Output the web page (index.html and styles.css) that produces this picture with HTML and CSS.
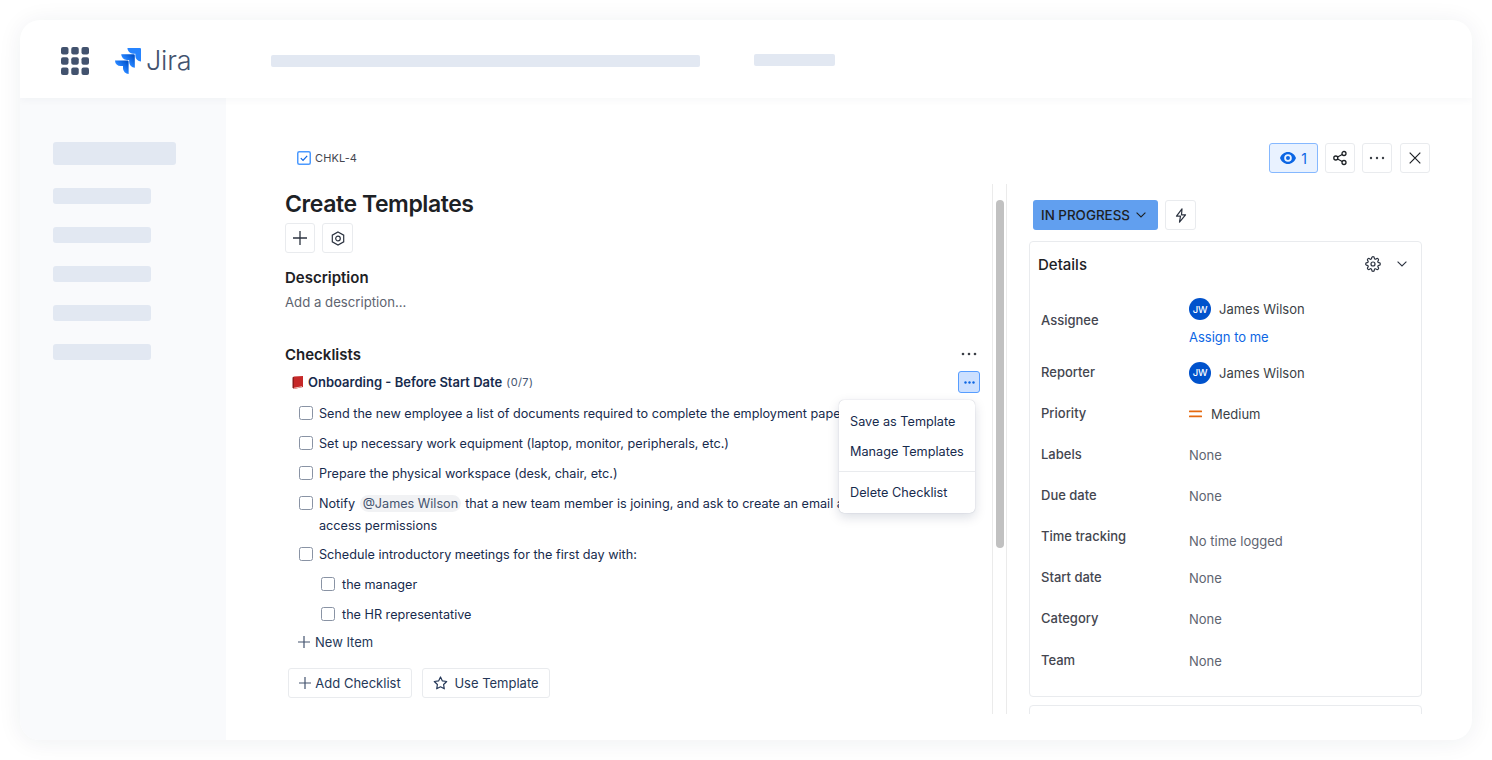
FILE: index.html
```html
<!DOCTYPE html>
<html lang="en">
<head>
<meta charset="utf-8">
<title>Create Templates</title>
<link rel="stylesheet" href="styles.css">
</head>
<body>
<div class="app">
  <header class="top">
    <svg class="apps" width="28" height="28" viewBox="0 0 28 28" fill="#42526e">
      <rect x="0" y="0" width="7.5" height="7.5" rx="2"/><rect x="10.25" y="0" width="7.5" height="7.5" rx="2"/><rect x="20.5" y="0" width="7.5" height="7.5" rx="2"/>
      <rect x="0" y="10.25" width="7.5" height="7.5" rx="2"/><rect x="10.25" y="10.25" width="7.5" height="7.5" rx="2"/><rect x="20.5" y="10.25" width="7.5" height="7.5" rx="2"/>
      <rect x="0" y="20.5" width="7.5" height="7.5" rx="2"/><rect x="10.25" y="20.5" width="7.5" height="7.5" rx="2"/><rect x="20.5" y="20.5" width="7.5" height="7.5" rx="2"/>
    </svg>
    <svg class="mark" width="26" height="26" viewBox="0 0 24 24">
      <defs>
        <linearGradient id="g1" x1="0.9" y1="0.1" x2="0.45" y2="0.55"><stop offset="0" stop-color="#0052cc"/><stop offset="1" stop-color="#2684ff"/></linearGradient>
      </defs>
      <path fill="url(#g1)" d="M11.571 11.513H0a5.218 5.218 0 0 0 5.232 5.215h2.13v2.057A5.215 5.215 0 0 0 12.575 24V12.518a1.005 1.005 0 0 0-1.005-1.005z"/>
      <path fill="url(#g1)" d="M17.294 5.757H5.736a5.215 5.215 0 0 0 5.215 5.214h2.129v2.058a5.218 5.218 0 0 0 5.215 5.214V6.758a1.001 1.001 0 0 0-1.001-1.001z"/>
      <path fill="#2684ff" d="M23.013 0H11.455a5.215 5.215 0 0 0 5.215 5.215h2.129v2.057A5.215 5.215 0 0 0 24 12.483V1.005A1.001 1.001 0 0 0 23.013 0z"/>
    </svg>
    <span class="jira">Jira</span>
    <span class="skel skel-search"></span>
    <span class="skel skel-link"></span>
  </header>
  <div class="body">
    <aside class="side">
      <span class="skel skel-head"></span>
      <span class="skel skel-item"></span>
      <span class="skel skel-item"></span>
      <span class="skel skel-item"></span>
      <span class="skel skel-item"></span>
      <span class="skel skel-item"></span>
    </aside>
    <main class="main">
      <div class="issue-head">
        <div class="crumb">
          <svg width="14" height="14" viewBox="0 0 14 14"><rect x="0.75" y="0.75" width="12.5" height="12.5" rx="1.5" fill="#fff" stroke="#4c9aff" stroke-width="1.5"/><path d="M3.8 7.2l2.2 2.2 4.2-4.6" fill="none" stroke="#0c66e4" stroke-width="1.2"/></svg>
          <span>CHKL-4</span>
        </div>
        <div class="head-actions">
          <button class="btn btn-watch">
            <svg width="16" height="12" viewBox="0 0 16 12"><path fill="#0c66e4" fill-rule="evenodd" d="M8 0C4.300 0 1.300 2.500 0 6c1.300 3.500 4.300 6 8 6s6.700-2.500 8-6c-1.300-3.500-4.300-6-8-6zm0 9.800a3.800 3.800 0 1 1 0-7.600 3.800 3.800 0 0 1 0 7.600zM8 4a2 2 0 1 0 0 4 2 2 0 0 0 0-4z"/></svg>
            <span>1</span>
          </button>
          <button class="btn btn-icon">
            <svg width="16" height="16" viewBox="0 0 16 16" fill="none" stroke="#1d2125" stroke-width="1.3"><circle cx="12" cy="3.500" r="2"/><circle cx="3.800" cy="8" r="2"/><circle cx="12" cy="12.500" r="2"/><path d="M5.600 7l4.600-2.500M5.600 9l4.600 2.500"/></svg>
          </button>
          <button class="btn btn-icon">
            <svg width="16" height="4" viewBox="0 0 16 4" fill="#3b3f46"><circle cx="2" cy="2" r="1.200"/><circle cx="8" cy="2" r="1.200"/><circle cx="14" cy="2" r="1.200"/></svg>
          </button>
          <button class="btn btn-icon btn-close">
            <svg width="12" height="12" viewBox="0 0 12 12" fill="none" stroke="#1d2125" stroke-width="1.200"><path d="M.7.7l10.600 10.600M11.300.7L.7 11.300"/></svg>
          </button>
        </div>
      </div>
      <div class="columns">
        <section class="left">
          <h1 class="title">Create Templates</h1>
          <div class="title-actions">
            <button class="btn btn-icon">
              <svg width="14" height="14" viewBox="0 0 14 14" fill="none" stroke="#2c3340" stroke-width="1.300"><path d="M7 0v14M0 7h14"/></svg>
            </button>
            <button class="btn btn-icon btn-wide">
              <svg width="14" height="15" viewBox="0 0 14 15" fill="none" stroke="#2c3340" stroke-width="1.200"><path d="M7 .9l5.700 3.300v6.600L7 14.100 1.300 10.800V4.200z"/><circle cx="7" cy="7.500" r="2.300"/></svg>
            </button>
          </div>
          <h2 class="section desc-title">Description</h2>
          <p class="desc">Add a description...</p>
          <div class="check-head">
            <h2 class="section">Checklists</h2>
            <svg class="more" width="16" height="4" viewBox="0 0 16 4" fill="#3b3f46"><circle cx="2" cy="2" r="1.300"/><circle cx="8" cy="2" r="1.300"/><circle cx="14" cy="2" r="1.300"/></svg>
          </div>
          <div class="list-head">
            <svg class="book" width="11" height="13" viewBox="0 0 11 13"><path fill="#c62828" d="M2 0.500l9-0.500v11l-9 2z"/><path fill="#8e1c1c" d="M0.500 1.500L2 0.500V13L0.500 11.500z"/><path fill="#f1d9d0" d="M2 11.800l8-1.500v.7l-8 1.700z"/></svg>
            <strong>Onboarding - Before Start Date</strong>
            <span class="count">(0/7)</span>
            <button class="dots">
              <svg width="11" height="3" viewBox="0 0 11 3" fill="#0c66e4"><circle cx="1.500" cy="1.500" r="1.200"/><circle cx="5.500" cy="1.500" r="1.200"/><circle cx="9.500" cy="1.500" r="1.200"/></svg>
            </button>
          </div>
          <div class="item"><span class="box"></span><span>Send the new employee a list of documents required to complete the employment pape</span></div>
          <div class="item"><span class="box"></span><span>Set up necessary work equipment (laptop, monitor, peripherals, etc.)</span></div>
          <div class="item"><span class="box"></span><span>Prepare the physical workspace (desk, chair, etc.)</span></div>
          <div class="item item-multi"><span class="box"></span><span>Notify <span class="mention">@James Wilson</span> that a new team member is joining, and ask to create an email a<br>access permissions</span></div>
          <div class="item"><span class="box"></span><span>Schedule introductory meetings for the first day with:</span></div>
          <div class="item item-sub"><span class="box"></span><span>the manager</span></div>
          <div class="item item-sub"><span class="box"></span><span>the HR representative</span></div>
          <div class="new-item">
            <svg width="12" height="12" viewBox="0 0 12 12" fill="none" stroke="#44546f" stroke-width="1.200"><path d="M6 0v12M0 6h12"/></svg>
            <span>New Item</span>
          </div>
          <div class="list-actions">
            <button class="btn btn-text btn-add">
              <svg width="12" height="12" viewBox="0 0 12 12" fill="none" stroke="#44546f" stroke-width="1.200"><path d="M6 0v12M0 6h12"/></svg>
              <span>Add Checklist</span>
            </button>
            <button class="btn btn-text btn-tpl">
              <svg width="15" height="14" viewBox="0 0 15 14" fill="none" stroke="#253858" stroke-width="1.200" stroke-linejoin="round"><path d="M7.500 1l1.900 3.900 4.300.6-3.100 3 .7 4.300-3.800-2-3.800 2 .7-4.300-3.100-3 4.300-.6z"/></svg>
              <span>Use Template</span>
            </button>
          </div>
          <div class="menu">
            <div class="menu-group">
              <div class="menu-item">Save as Template</div>
              <div class="menu-item">Manage Templates</div>
            </div>
            <div class="menu-group menu-last">
              <div class="menu-item">Delete Checklist</div>
            </div>
          </div>
        </section>
        <div class="gutter"><span class="thumb"></span></div>
        <section class="right">
          <div class="status-row">
            <button class="status">
              <span>IN PROGRESS</span>
              <svg width="10" height="6" viewBox="0 0 10 6" fill="none" stroke="#1d2125" stroke-width="1.100"><path d="M.6.6L5 5 9.400.6"/></svg>
            </button>
            <button class="btn btn-bolt">
              <svg width="14" height="15" viewBox="0 0 14 15" fill="none" stroke="#2c3340" stroke-width="1.200" stroke-linejoin="round"><path d="M8 .8L2.500 8.200h4l-1 6L11.500 6.800h-4z"/></svg>
            </button>
          </div>
          <div class="details">
            <div class="details-head">
              <h3>Details</h3>
              <svg class="gear" width="16" height="16" viewBox="0 0 24 24" fill="none" stroke="#2c3340" stroke-width="1.800" stroke-linecap="round" stroke-linejoin="round"><circle cx="12" cy="12" r="3"/><path d="M19.400 15a1.650 1.650 0 0 0 .33 1.820l.06.06a2 2 0 1 1-2.830 2.830l-.06-.06a1.650 1.650 0 0 0-2.830 1.150V21a2 2 0 1 1-4 0v-.09A1.650 1.650 0 0 0 7.160 19.700l-.06.06a2 2 0 1 1-2.830-2.830l.06-.06A1.650 1.650 0 0 0 3.100 14H3a2 2 0 1 1 0-4h.09A1.650 1.650 0 0 0 4.300 7.160l-.06-.06a2 2 0 1 1 2.830-2.830l.06.06A1.650 1.650 0 0 0 10 3.100V3a2 2 0 1 1 4 0v.09a1.650 1.650 0 0 0 2.840 1.210l.06-.06a2 2 0 1 1 2.830 2.830l-.06.06A1.650 1.650 0 0 0 20.900 10H21a2 2 0 1 1 0 4h-.09a1.650 1.650 0 0 0-1.510 1z"/></svg>
              <svg class="chev" width="10" height="6" viewBox="0 0 10 6" fill="none" stroke="#2c3340" stroke-width="1.100"><path d="M.6.6L5 5 9.400.6"/></svg>
            </div>
            <div class="drow drow-tall">
              <span class="dlabel">Assignee</span>
              <div class="stack">
                <div class="person"><span class="avatar">JW</span><span class="pname">James Wilson</span></div>
                <a class="assign">Assign to me</a>
              </div>
            </div>
            <div class="drow">
              <span class="dlabel">Reporter</span>
              <div class="person"><span class="avatar">JW</span><span class="pname">James Wilson</span></div>
            </div>
            <div class="drow">
              <span class="dlabel">Priority</span>
              <div class="priority">
                <svg width="13" height="8" viewBox="0 0 13 8" fill="#e56910"><rect width="13" height="1.700" y="0.500" rx="0.500"/><rect width="13" height="1.700" y="5.500" rx="0.500"/></svg>
                <span class="pname">Medium</span>
              </div>
            </div>
            <div class="drow"><span class="dlabel">Labels</span><span class="dval">None</span></div>
            <div class="drow"><span class="dlabel">Due date</span><span class="dval">None</span></div>
            <div class="drow"><span class="dlabel">Time tracking</span><span class="dval dval-low">No time logged</span></div>
            <div class="drow"><span class="dlabel">Start date</span><span class="dval">None</span></div>
            <div class="drow"><span class="dlabel">Category</span><span class="dval">None</span></div>
            <div class="drow drow-last"><span class="dlabel">Team</span><span class="dval">None</span></div>
          </div>
          <div class="details details-next"></div>
        </section>
      </div>
    </main>
  </div>
</div>
</body>
</html>
```
FILE: styles.css
```css
* { box-sizing: border-box; }
html, body { margin: 0; padding: 0; height: 100%; background: #fff; overflow: hidden; }
body { font-family: Inter, "Liberation Sans", sans-serif; color: #172b4d; padding: 20px; }
h1, h2, h3, p { margin: 0; }
button { font: inherit; color: inherit; background: #fff; padding: 0; cursor: pointer; }

.app {
  width: 1452px; height: 720px; background: #fff; border-radius: 20px;
  box-shadow: 0 2px 24px rgba(30, 40, 70, .07);
  display: flex; flex-direction: column; overflow: hidden;
}
.top {
  height: 78px; flex: none; display: flex; align-items: center; padding-left: 41px;
  position: relative; box-shadow: 0 2px 8px rgba(30, 40, 70, .04);
}
.apps { flex: none; margin-top: 4px; margin-right: 26px; }
.mark { flex: none; margin-top: 3px; }
.jira { font-size: 27px; font-weight: 300; color: #42526e; margin-left: 5px; width: 125px; margin-top: 2px; letter-spacing: -.2px; }
.skel { display: block; background: #e2e8f2; border-radius: 2px; }
.skel-search { width: 429px; height: 12px; margin-top: 4px; }
.skel-link { width: 81px; height: 12px; margin-left: 54px; margin-top: 2px; }

.body { flex: 1; display: flex; min-height: 0; }
.side { width: 206px; flex: none; background: #f9fafc; padding: 44px 0 0 33px; }
.skel-head { width: 123px; height: 23px; margin-bottom: 23px; border-radius: 3px; }
.skel-item { width: 98px; height: 16px; margin-bottom: 23px; border-radius: 3px; }

.main { flex: 1; min-width: 0; display: flex; flex-direction: column; padding: 45px 42px 26px 0; }
.issue-head { display: flex; justify-content: space-between; align-items: center; height: 30px; flex: none; padding-left: 71px; }
.crumb { display: flex; align-items: center; gap: 4px; font-size: 11px; color: #44464f; letter-spacing: .1px; }
.head-actions { display: flex; gap: 7px; }

.btn { border: 1px solid #e9ebee; border-radius: 3px; height: 30px; display: inline-flex; align-items: center; justify-content: center; }
.btn-icon { width: 30px; }
.btn-wide { width: 31px; }
.btn-close { margin-left: 1px; }
.btn-watch { width: 49px; background: #e9f2ff; border-color: #85b8ff; color: #0c66e4; gap: 5px; font-size: 14px; }

.columns { flex: 1; min-height: 0; display: flex; margin-top: 11px; overflow: hidden; }
.left { width: 767px; flex: none; border-right: 1px solid #ebebeb; padding-left: 59px; position: relative; }
.gutter { width: 13px; flex: none; padding: 16px 2px 0 3px; }
.thumb { display: block; width: 8px; height: 348px; background: #c1c1c1; border-radius: 4px; }
.right { width: 439px; flex: none; border-left: 1px solid #ebebeb; border-right: 1px solid #ebebeb; padding-left: 22px; }

.title { font-size: 23px; line-height: 30px; font-weight: 600; color: #1d2125; margin-top: 5px; letter-spacing: -.42px; }
.title-actions { display: flex; gap: 7px; margin-top: 4px; }
.section { font-size: 15px; line-height: 20px; font-weight: 600; color: #1d2125; }
.desc-title { margin-top: 15px; }
.desc { font-size: 13.2px; line-height: 20px; color: #5e6470; margin-top: 4px; }
.check-head { display: flex; justify-content: space-between; align-items: center; margin-top: 33px; width: 692px; }
.more { flex: none; margin-top: -2px; }
.list-head { display: flex; align-items: center; height: 22px; margin-top: 6px; padding-left: 7px; width: 695px; font-size: 13px; }
.book { flex: none; margin-right: 5px; }
.list-head strong { font-weight: 600; color: #172b4d; }
.count { font-size: 11px; margin-left: 4px; color: #44546f; letter-spacing: .4px; }
.dots { margin-left: auto; width: 22px; height: 22px; background: #cce0ff; border: 1px solid #579dff; border-radius: 3px; display: flex; align-items: center; justify-content: center; }

.item { display: flex; align-items: center; height: 30px; padding-left: 14px; font-size: 12.65px; color: #172b4d; white-space: nowrap; }
.list-head + .item { margin-top: 5px; }
.item-multi { align-items: flex-start; height: 51px; padding-top: 5px; line-height: 22px; }
.item-multi .box { margin-top: 3px; }
.item-sub { padding-left: 36px; }
.item-sub .box { margin-right: 7px; }
.box { width: 14px; height: 14px; flex: none; border: 1.5px solid #8993a4; border-radius: 2.5px; background: #fff; margin-right: 6px; }
.mention { background: #f1f2f4; color: #44546f; border-radius: 9px; padding: 1px 3px; margin: 0 .5px 0 1px; }

.new-item { display: flex; align-items: center; gap: 5px; height: 24px; margin-top: 1px; padding-left: 13px; font-size: 13px; color: #253858; }
.list-actions { display: flex; gap: 10px; margin-top: 14px; padding-left: 3px; }
.btn-text { gap: 4px; font-size: 13px; color: #253858; }
.btn-add { width: 124px; }
.btn-tpl { width: 128px; gap: 6px; }

.menu {
  position: absolute; left: 613px; top: 216px; width: 136px; height: 113px;
  background: #fff; border-radius: 5px; font-size: 12.7px; color: #172b4d;
  box-shadow: 0 4px 12px rgba(9, 30, 66, .15), 0 0 1px rgba(9, 30, 66, .3);
  padding: 7px 0 0;
}
.menu-group { border-bottom: 1px solid #e9ebee; padding-bottom: 4px; }
.menu-last { border-bottom: 0; padding-top: 6px; padding-bottom: 0; }
.menu-item { height: 30px; line-height: 30px; padding-left: 11px; white-space: nowrap; }

.status-row { display: flex; gap: 7px; margin: 16px 0 0 4px; }
.status { width: 125px; height: 30px; background: #619fef; border: 0; border-radius: 3px; display: flex; align-items: center; padding-left: 8px; gap: 6px; font-size: 13.4px; font-weight: 500; color: #1d2125; }
.btn-bolt { width: 31px; }

.details { width: 393px; height: 456px; margin-top: 11px; border: 1px solid #e9ebee; border-radius: 4px; padding: 0 11px; font-size: 13px; }
.details-next { margin-top: 8px; height: 60px; }
.details-head { display: flex; align-items: center; height: 44px; margin-left: -3px; margin-bottom: 7px; }
.details-head h3 { font-size: 15px; font-weight: 500; color: #1d2125; flex: 1; }
.gear { flex: none; margin-right: 16px; }
.chev { flex: none; margin-right: 3px; }
.drow { display: grid; grid-template-columns: 148px 1fr; align-items: center; height: 41px; }
.drow-tall { height: 59px; }
.drow-last { margin-top: 1px; }
.dlabel { font-size: 13px; font-weight: 500; color: #44464f; margin-bottom: 2px; }
.drow-tall .dlabel { margin-bottom: 5px; }
.stack { display: flex; flex-direction: column; align-self: start; margin-top: 5px; }
.person { display: flex; align-items: center; gap: 8px; height: 22px; }
.avatar { width: 22px; height: 22px; border-radius: 50%; background: #0052cc; color: #fff; font-size: 9.5px; font-weight: 500; display: flex; align-items: center; justify-content: center; letter-spacing: -.2px; }
.pname { color: #3b3f46; }
.assign { color: #0c66e4; margin-top: 7px; line-height: 20px; }
.priority { display: flex; align-items: center; gap: 9px; }
.dval { color: #5e6470; }
.dval-low { margin-top: 8px; }
```
